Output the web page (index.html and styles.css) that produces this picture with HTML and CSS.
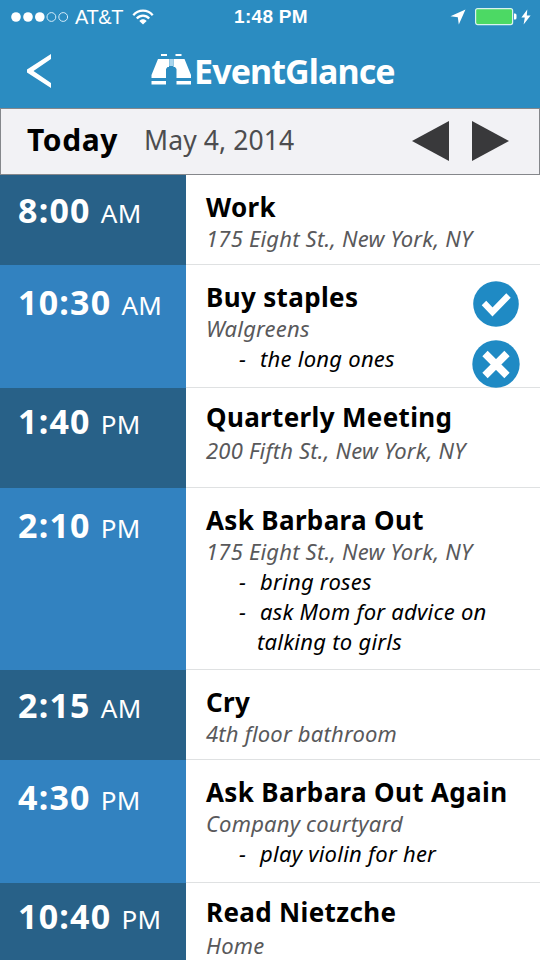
FILE: index.html
```html
<!DOCTYPE html>
<html lang="en">
<head>
  <meta charset="UTF-8" />
  <title>EventGlance</title>
  <link rel="stylesheet" href="styles.css">
</head>
<body>
  <header class="header">
    <div class="status-bar">
      <div class="status-left">
        <svg class="signal" width="58" height="12" viewBox="0 0 58 12">
          <g fill="#fff">
            <circle cx="5" cy="6" r="4.8" />
            <circle cx="17" cy="6" r="4.8" />
            <circle cx="28.8" cy="6" r="4.8" />
          </g>
          <g fill="none" stroke="#d5ecfa" stroke-width="1">
            <circle cx="40.4" cy="6" r="4.4" />
            <circle cx="52.2" cy="6" r="4.4" />
          </g>
        </svg>
        <span class="carrier">AT&amp;T</span>
        <svg class="wifi" width="22" height="16" viewBox="0 0 22 16">
          <g fill="none" stroke="#fff" stroke-width="2.3">
            <path d="M1.3 6.2C6.5 .2 15.5 .2 20.7 6.2" />
            <path d="M4.8 9.5C8.3 5.6 13.7 5.6 17.2 9.5" />
          </g>
          <path d="M7.3 12C9.4 9.6 12.6 9.6 14.7 12L11 15.6z" fill="#fff" />
        </svg>
      </div>
      <span class="clock">1:48 PM</span>
      <div class="status-right">
        <svg width="16" height="16" viewBox="0 0 16 16"><path d="M15.5 .5L8.8 15.5L7.8 8.2L.5 7.2z" fill="#fff" /></svg>
        <svg class="battery" width="42" height="18" viewBox="0 0 42 18">
          <rect x=".6" y=".6" width="37" height="16" rx="2" fill="#4cd964" stroke="#d9f3ee" stroke-width="1.2" />
          <path d="M39 5.5h1q1.5 0 1.5 1.5v3q0 1.5-1.5 1.5h-1z" fill="#fff" />
        </svg>
        <svg width="10" height="16" viewBox="0 0 10 16"><path d="M6.3 .5L.4 8.6h3.4L2.6 15.5L9.6 6.4H5.8z" fill="#fff" /></svg>
      </div>
    </div>
    <div class="nav">
      <svg class="back" width="26" height="34" viewBox="0 0 26 34"><path d="M24 0v5L6.500 17L24 29v5L0 18.500v-3z" fill="#fff" /></svg>
      <div class="logo">
        <svg width="41" height="31" viewBox="0 0 41 31">
          <g fill="#fff">
            <path d="M10 0h6v2h-6zM24.500 0h6v2h-6z" />
            <path d="M7 5h11v8h-1.500L15 15v9H.5V21z" />
            <path d="M33.500 5h-11v8H24l1.500 2v9H40V21z" />
            <path d="M.5 27H15v3.500H.5zM25.500 27H40v3.500H25.500z" />
          </g>
          <path d="M18.200 5h4v7h-4z" fill="#a9d5ed" />
        </svg>
        <span class="logo-text">EventGlance</span>
      </div>
    </div>
  </header>

  <div class="date-bar">
    <span class="today">Today</span>
    <span class="date">May 4, 2014</span>
    <svg class="prev" width="37" height="40" viewBox="0 0 37 40"><path d="M0 20L37 0v40z" fill="#39393b" /></svg>
    <svg class="next" width="37" height="40" viewBox="0 0 37 40"><path d="M37 20L0 0v40z" fill="#39393b" /></svg>
  </div>

  <main class="schedule">
    <section class="event short">
      <div class="time"><b>8:00</b> AM</div>
      <div class="info">
        <h2>Work</h2>
        <p class="place">175 Eight St., New York, NY</p>
      </div>
    </section>

    <section class="event medium">
      <div class="time"><b>10:30</b> AM</div>
      <div class="info">
        <h2>Buy staples</h2>
        <p class="place">Walgreens</p>
        <ul>
          <li>the long ones</li>
        </ul>
      </div>
      <div class="actions">
        <svg width="46" height="46" viewBox="0 0 46 46">
          <circle cx="23" cy="23" r="22.800" fill="#1f8ac4" />
          <path d="M11 22l8.500 9L35.500 14.500" fill="none" stroke="#fff" stroke-width="6.200" />
        </svg>
        <svg width="48" height="48" viewBox="0 0 48 48">
          <circle cx="24" cy="24" r="23.700" fill="#1f8ac4" />
          <path d="M13 13.500L35 35.500M35 13.500L13 35.500" fill="none" stroke="#fff" stroke-width="7.500" />
        </svg>
      </div>
    </section>

    <section class="event regular">
      <div class="time"><b>1:40</b> PM</div>
      <div class="info">
        <h2>Quarterly Meeting</h2>
        <p class="place">200 Fifth St., New York, NY</p>
      </div>
    </section>

    <section class="event tall">
      <div class="time"><b>2:10</b> PM</div>
      <div class="info">
        <h2>Ask Barbara Out</h2>
        <p class="place">175 Eight St., New York, NY</p>
        <ul>
          <li>bring roses</li>
          <li>ask Mom for advice on talking to girls</li>
        </ul>
      </div>
    </section>

    <section class="event short">
      <div class="time"><b>2:15</b> AM</div>
      <div class="info">
        <h2>Cry</h2>
        <p class="place">4th floor bathroom</p>
      </div>
    </section>

    <section class="event medium">
      <div class="time"><b>4:30</b> PM</div>
      <div class="info">
        <h2>Ask Barbara Out Again</h2>
        <p class="place">Company courtyard</p>
        <ul>
          <li>play violin for her</li>
        </ul>
      </div>
    </section>

    <section class="event regular">
      <div class="time"><b>10:40</b> PM</div>
      <div class="info">
        <h2>Read Nietzche</h2>
        <p class="place">Home</p>
      </div>
    </section>
  </main>
</body>
</html>
```
FILE: styles.css
```css
* {
  box-sizing: border-box;
}

body {
  margin: 0;
  height: 960px;
  overflow: hidden;
  background: #fff;
  font-family: "Noto Sans", "Open Sans", sans-serif;
}

svg {
  display: block;
  flex: none;
}

.header {
  height: 108px;
  background: #2b8cc1;
  color: #fff;
}

.status-bar {
  display: grid;
  grid-template-columns: 1fr auto 1fr;
  align-items: center;
  height: 34px;
  padding: 0 9px 0 11px;
  font-family: "Liberation Sans", sans-serif;
  font-size: 20px;
}

.status-left,
.status-right {
  display: flex;
  align-items: center;
}

.carrier {
  margin: 0 9px 0 6px;
  letter-spacing: -0.4px;
}

.clock {
  font-weight: bold;
  font-size: 19px;
  letter-spacing: 0.3px;
}

.status-right {
  justify-content: flex-end;
}

.battery {
  margin: 0 4px 0 9px;
}

.nav {
  display: flex;
  align-items: center;
  height: 73px;
  padding-left: 27px;
}

.logo {
  display: flex;
  align-items: center;
  margin-left: 98px;
}

.logo svg {
  margin-top: -3px;
}

.logo-text {
  margin-left: 2px;
  font-size: 34px;
  font-weight: bold;
  line-height: 40px;
  letter-spacing: -0.9px;
}

.date-bar {
  display: flex;
  align-items: center;
  height: 67px;
  padding: 0 30px 2px 26px;
  background: #f2f2f5;
  border: 1px solid #85878b;
}

.today {
  font-size: 30px;
  font-weight: bold;
  line-height: 40px;
  letter-spacing: 0.6px;
}

.date {
  margin-left: 26px;
  font-size: 26.5px;
  line-height: 40px;
  color: #4d4d4f;
  letter-spacing: 0.1px;
}

.today,
.date {
  margin-top: -2px;
}

.prev {
  margin-left: auto;
}

.next {
  margin-left: 23px;
}

.event {
  position: relative;
  display: flex;
  border-bottom: 1px solid #dfe1e2;
}

.short { height: 90px; }
.medium { height: 123px; }
.regular { height: 100px; }
.tall { height: 182px; }

.time {
  width: 186px;
  margin-bottom: -1px;
  padding: 15px 0 0 18px;
  background: #286188;
  color: #fff;
  font-size: 26px;
  line-height: 40px;
  letter-spacing: 0.3px;
  white-space: nowrap;
}

.time b {
  margin-right: 3px;
  font-size: 34px;
  letter-spacing: 1.2px;
}

.regular .time {
  padding-top: 13px;
}

.event:nth-child(even) .time {
  padding-top: 17px;
  background: #3282c0;
}

.info {
  flex: 1;
  padding: 17px 0 0 20px;
  line-height: 30px;
}

.regular .info {
  padding-top: 14px;
}

.info h2 {
  margin: 0 0 1px;
  font-size: 26px;
  line-height: 30px;
  letter-spacing: 0.35px;
}

.place {
  margin: 0;
  font-size: 22px;
  font-style: italic;
  color: #59595b;
  letter-spacing: 0.2px;
}

.regular .place {
  margin-top: 3px;
}

.info ul {
  margin: 0;
  padding: 0 20px 0 51px;
  list-style: none;
  font-size: 22px;
  font-style: italic;
  color: #000;
  letter-spacing: 0.25px;
}

/* the dash hangs in front of the first line only */
.info li {
  text-indent: -18px;
}

.info li::before {
  content: "-";
  display: inline-block;
  width: 21px;
  text-indent: 0;
}

.actions {
  position: absolute;
  top: 16px;
  right: 20px;
  display: flex;
  flex-direction: column;
  align-items: center;
  gap: 13px;
}
```
